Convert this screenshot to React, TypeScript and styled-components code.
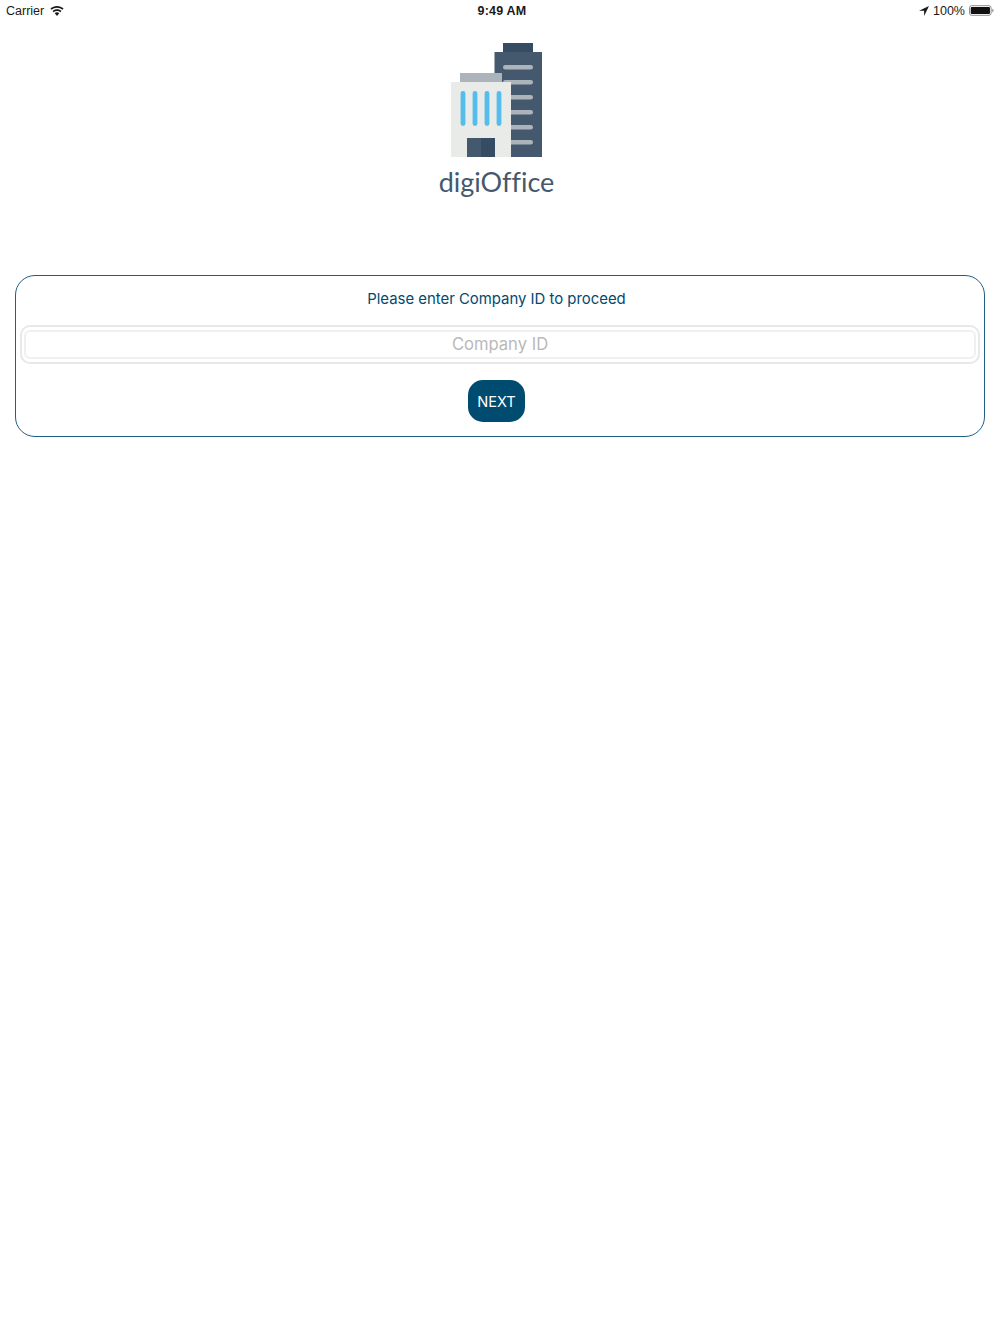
import React from "react";
import styled, { createGlobalStyle } from "styled-components";

const Global = createGlobalStyle`
  html, body { margin: 0; padding: 0; background: #fff; }
  body { font-family: "Inter", "Liberation Sans", sans-serif; }
`;
const Page = styled.div`
  width: 1000px;
  height: 1334px;
  background: #fff;
  display: flex;
  flex-direction: column;
  overflow: hidden;
`;
const StatusBar = styled.div`
  height: 20px;
  padding: 0 6px;
  display: grid;
  grid-template-columns: 1fr auto 1fr;
  align-items: center;
  font-family: "Liberation Sans", sans-serif;
  font-size: 12.5px;
  color: #1a1a1a;
`;
const StatusLeft = styled.div`
  display: flex;
  align-items: center;
  gap: 6px;
  padding-top: 1px;
`;
const StatusRight = styled.div`
  display: flex;
  align-items: center;
  justify-content: flex-end;
  gap: 4px;
  padding-top: 1px;
`;
const Time = styled.div`
  font-weight: 700;
  font-size: 12.5px;
  letter-spacing: 0.2px;
  margin-left: 4px;
  padding-top: 1px;
`;
const Brand = styled.div`
  display: flex;
  flex-direction: column;
  align-items: center;
  margin-top: 23px;
  padding-right: 7px;
`;
const BrandName = styled.div`
  font-family: "Lato", sans-serif;
  font-size: 27px;
  font-variant-ligatures: none;
  line-height: 34px;
  color: #44596d;
  margin-top: 7px;
`;
const Card = styled.section`
  box-sizing: border-box;
  margin: 76px 15px 0;
  height: 162px;
  border: 1px solid #1f5f85;
  border-radius: 20px;
  padding: 0 4px;
  display: flex;
  flex-direction: column;
`;
const Prompt = styled.div`
  height: 49px;
  line-height: 47px;
  text-align: center;
  padding-right: 7px;
  font-size: 14.9px;
  color: #004b70;
`;
const FieldFrame = styled.div`
  box-sizing: border-box;
  height: 39px;
  border: 2px solid #e8e8e8;
  border-radius: 10px;
  padding: 3px 2px;
`;
const Field = styled.input`
  box-sizing: border-box;
  display: block;
  width: 100%;
  height: 29px;
  border: 2px solid #f0f0f0;
  border-radius: 6px;
  background: #fff;
  outline: none;
  padding: 0 0 2px;
  text-align: center;
  font-family: inherit;
  font-size: 16.6px;
  &::placeholder { color: #b9b9b9; opacity: 1; }
`;
const Actions = styled.div`
  display: flex;
  justify-content: center;
  padding: 16px 7px 0 0;
`;
const NextButton = styled.button`
  width: 57px;
  height: 42px;
  border: 0;
  border-radius: 15px;
  background: #004b70;
  color: #fff;
  font-family: inherit;
  font-size: 14.6px;
  padding: 1px 0 0;
`;

const Wifi = () => (
  <svg width="14" height="10" viewBox="0 0 15 11" fill="#1a1a1a">
    <path d="M7.5 0C4.7 0 2.2 1 .3 2.8l1.2 1.4C3.1 2.7 5.2 1.9 7.5 1.9s4.4.8 6 2.3l1.2-1.4C12.8 1 10.3 0 7.5 0z" />
    <path d="M7.5 3.6c-1.9 0-3.6.7-4.9 1.9l1.2 1.4c1-.9 2.3-1.4 3.7-1.4s2.7.5 3.7 1.4l1.2-1.4C11.1 4.3 9.4 3.6 7.5 3.6z" />
    <path d="M7.5 7c-1 0-1.8.3-2.5 1l2.5 3 2.5-3c-.7-.7-1.5-1-2.5-1z" />
  </svg>
);
const Arrow = () => (
  <svg width="10" height="10" viewBox="0 0 9 9" fill="#1a1a1a">
    <path d="M9 0 0 4.2h4.6V9z" />
  </svg>
);
const Battery = () => (
  <svg width="25" height="11" viewBox="0 0 26 11">
    <rect x=".5" y=".5" width="22.5" height="10" rx="2.2" fill="none" stroke="#8a8a8a" />
    <rect x="1.8" y="1.8" width="20" height="7.4" rx="1" fill="#111" />
    <path d="M24.2 3.6c.8.2 1.3.9 1.3 1.9s-.5 1.7-1.3 1.9z" fill="#8a8a8a" />
  </svg>
);
const Logo = () => (
  <svg width="92" height="115" viewBox="0 0 92 115">
    <rect x="52" y="0" width="30" height="10" fill="#364c63" />
    <rect x="43.5" y="9" width="47.5" height="105" fill="#44596d" />
    {[24, 39, 54, 69, 84, 99].map((y) => (
      <rect key={y} x="52" y={y - 2} width="30" height="4.4" rx="2.2" fill="#adb3bb" />
    ))}
    <rect x="9" y="30" width="42" height="10" fill="#adb3bb" />
    <rect x="0" y="39" width="60" height="75" fill="#e9ebe9" />
    {[12, 24, 36, 48].map((x) => (
      <rect key={x} x={x - 2.4} y="48" width="4.8" height="35" rx="2.4" fill="#54bdec" />
    ))}
    <rect x="16" y="95" width="14" height="19" fill="#44596d" />
    <rect x="30" y="95" width="14" height="19" fill="#364c63" />
  </svg>
);

export default function App() {
  return (
    <Page>
      <Global />
      <StatusBar>
        <StatusLeft>
          Carrier <Wifi />
        </StatusLeft>
        <Time>9:49 AM</Time>
        <StatusRight>
          <Arrow /> 100% <Battery />
        </StatusRight>
      </StatusBar>
      <Brand>
        <Logo />
        <BrandName>digiOffice</BrandName>
      </Brand>
      <Card>
        <Prompt>Please enter Company ID to proceed</Prompt>
        <FieldFrame>
          <Field placeholder="Company ID" />
        </FieldFrame>
        <Actions>
          <NextButton>NEXT</NextButton>
        </Actions>
      </Card>
    </Page>
  );
}
